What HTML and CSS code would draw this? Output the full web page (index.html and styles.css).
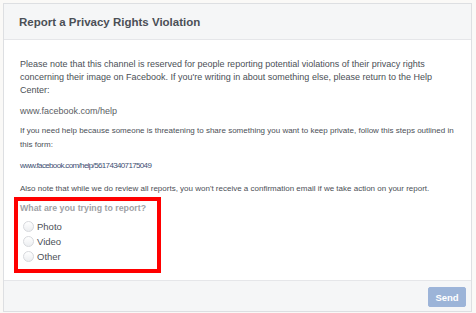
FILE: index.html
```html
<!DOCTYPE html>
<html>
<head>
<meta charset="utf-8">
<link rel="stylesheet" href="styles.css">
</head>
<body>
<div class="card">
  <div class="header">
    <h1 class="title">Report a Privacy Rights Violation</h1>
  </div>
  <div class="content">
    <p class="p1">Please note that this channel is reserved for people reporting potential violations of their privacy rights concerning their image on Facebook. If you're writing in about something else, please return to the Help Center:</p>
    <p class="link1">www.facebook.com/help</p>
    <p class="p2">If you need help because someone is threatening to share something you want to keep private, follow this steps outlined in this form:</p>
    <p class="link2">www.facebook.com/help/561743407175049</p>
    <p class="p3">Also note that while we do review all reports, you won't receive a confirmation email if we take action on your report.</p>
    <div class="highlight">
      <div class="question">What are you trying to report?</div>
      <label class="option"><span class="radio"></span><span class="label">Photo</span></label>
      <label class="option"><span class="radio"></span><span class="label">Video</span></label>
      <label class="option"><span class="radio"></span><span class="label">Other</span></label>
    </div>
  </div>
  <div class="footer">
    <button class="send">Send</button>
  </div>
</div>
</body>
</html>
```

FILE: styles.css
```css
html, body {
  margin: 0;
  padding: 0;
}
body {
  background: #faf9f7;
  font-family: "Liberation Sans", Arial, sans-serif;
  padding: 3px 4px 1px 3px;
  width: 476px;
  height: 313px;
  box-sizing: border-box;
}
.card {
  border: 1px solid #dddfe2;
  background: #fff;
  display: flex;
  flex-direction: column;
  height: 309px;
  box-sizing: border-box;
}
.header {
  height: 35px;
  background: #f5f6f7;
  border-bottom: 1px solid #e5e6e9;
  display: flex;
  align-items: center;
  padding-left: 15px;
}
.title {
  margin: 0;
  font-size: 11.5px;
  font-weight: bold;
  color: #4b4f56;
}
.content {
  flex: 1;
  padding: 18px 10px 0 16px;
  color: #4b4f56;
}
.content p {
  margin: 0;
}
.p1 {
  font-size: 9px;
  line-height: 13px;
}
.link1 {
  font-size: 9px;
  line-height: 13px;
  margin-top: 8px !important;
  color: #5a5d63;
}
.p2 {
  font-size: 8px;
  line-height: 14px;
  margin-top: 6px !important;
}
.link2 {
  font-size: 8px;
  letter-spacing: -0.65px;
  line-height: 14px;
  margin-top: 7px !important;
  color: #3e4f73;
}
.p3 {
  font-size: 8px;
  line-height: 14px;
  margin-top: 9px !important;
}
.highlight {
  margin: 1px 0 0 -6px;
  width: 137px;
  border: 4px solid #ff0000;
  padding: 1px 0 5px 2px;
  display: flex;
  flex-direction: column;
}
.question {
  font-size: 8.8px;
  font-weight: bold;
  color: #a0a2a6;
  line-height: 13px;
  margin-bottom: 4px;
}
.option {
  display: flex;
  align-items: center;
  height: 15px;
  gap: 3px;
}
.radio {
  width: 9px;
  height: 9px;
  border-radius: 50%;
  border: 1px solid #d7d9dd;
  background: linear-gradient(#ffffff, #eceef1);
  margin-left: 3px;
}
.label {
  font-size: 9.5px;
  color: #4b4f56;
}
.footer {
  height: 31px;
  background: #f5f6f7;
  border-top: 1px solid #e5e6e9;
  display: flex;
  justify-content: flex-end;
  align-items: flex-start;
  padding: 6px 5px 0 0;
  box-sizing: border-box;
}
.send {
  width: 38px;
  height: 20px;
  border: 1px solid #9db4d9;
  border-radius: 2px;
  background: #9cb4d8;
  color: #fff;
  font-family: "Liberation Sans", Arial, sans-serif;
  font-size: 9.5px;
  font-weight: bold;
  padding: 0;
}
```
